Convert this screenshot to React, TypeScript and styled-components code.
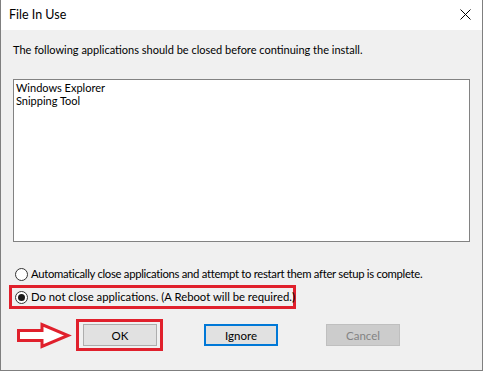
import React from "react";
import styled, { createGlobalStyle } from "styled-components";

const Global = createGlobalStyle`
  html, body { margin: 0; padding: 0; background: #ffffff; }
  body { font-family: Lato, "Noto Sans", sans-serif; font-size: 11px; color: #000; }
  * { box-sizing: border-box; }
`;

const Window = styled.div`
  width: 483px;
  height: 371px;
  border: 1px solid #7f7f7f;
  border-top: none;
  display: flex;
  flex-direction: column;
  background: #f0f0f0;
  overflow: hidden;
`;

const TitleBar = styled.div`
  height: 30px;
  background: #ffffff;
  display: flex;
  align-items: center;
  justify-content: space-between;
  padding: 0 11px 1px 8px;
`;

const TitleText = styled.span`
  font-size: 12.5px;
  color: #000;
`;

const CloseIcon = styled.svg`
  width: 11px;
  height: 11px;
  display: block;
`;

const Body = styled.div`
  flex: 1;
  display: flex;
  flex-direction: column;
  padding: 12px 12px 0 12px;
`;

const Instruction = styled.div`
  font-size: 11px;
  line-height: 16px;
  height: 16px;
`;

const ListBox = styled.div`
  margin-top: 21px;
  width: 457px;
  height: 163px;
  background: #ffffff;
  border: 1px solid #828282;
  padding: 1px 2px;
  display: flex;
  flex-direction: column;
`;

const ListItem = styled.div`
  line-height: 13px;
  height: 13px;
  font-size: 11px;
`;

const Options = styled.div`
  margin-top: 23px;
  display: flex;
  flex-direction: column;
  gap: 2px;
`;

const RadioRow = styled.label<{ $inset?: boolean }>`
  display: flex;
  align-items: center;
  gap: 3px;
  height: 18px;
  padding-left: ${(p) => (p.$inset ? 0 : 2)}px;
`;

const Highlight = styled.div`
  margin-left: -4px;
  width: 287px;
  height: 24px;
  border: 3px solid #e0202c;
  display: flex;
  align-items: center;
  padding-left: 3px;
`;

const Circle = styled.span<{ $checked?: boolean }>`
  width: 13px;
  height: 13px;
  border-radius: 50%;
  border: 1px solid #333333;
  background: #ffffff;
  display: flex;
  align-items: center;
  justify-content: center;
  flex: none;
  &::after {
    content: "";
    display: ${(p) => (p.$checked ? "block" : "none")};
    width: 7px;
    height: 7px;
    border-radius: 50%;
    background: #1a1a1a;
  }
`;

const RadioText = styled.span<{ $tight?: boolean }>`
  line-height: 16px;
  font-size: 11.3px;
  letter-spacing: ${(p) => (p.$tight ? "-0.3px" : "0")};
  white-space: nowrap;
`;

const ButtonRow = styled.div`
  margin-top: 10px;
  display: flex;
  align-items: center;
  padding-left: 4px;
`;

const Arrow = styled.svg`
  width: 55px;
  height: 27px;
  display: block;
  flex: none;
`;

const ButtonFrame = styled.div`
  margin-left: 4px;
  width: 87px;
  height: 32px;
  border: 3px solid #e0202c;
  padding: 2px 3px 2px 4px;
  display: flex;
`;

const Button = styled.div<{ $variant?: "default" | "focused" | "disabled" }>`
  width: 74px;
  height: 22px;
  flex: none;
  display: flex;
  align-items: center;
  justify-content: center;
  background: ${(p) => (p.$variant === "disabled" ? "#cccccc" : "#e1e1e1")};
  border: ${(p) =>
    p.$variant === "focused"
      ? "2px solid #0078d7"
      : p.$variant === "disabled"
      ? "1px solid #bfbfbf"
      : "1px solid #adadad"};
  color: ${(p) => (p.$variant === "disabled" ? "#838383" : "#000000")};
  font-size: 11.5px;
`;

const Spacer = styled.div<{ $w: number }>`
  width: ${(p) => p.$w}px;
  flex: none;
`;

export default function App() {
  return (
    <>
      <Global />
      <Window>
        <TitleBar>
          <TitleText>File In Use</TitleText>
          <CloseIcon viewBox="0 0 11 11">
            <path d="M0.5 0.5 L10.5 10.5 M10.5 0.5 L0.5 10.5" stroke="#000" strokeWidth="1" fill="none" />
          </CloseIcon>
        </TitleBar>
        <Body>
          <Instruction>The following applications should be closed before continuing the install.</Instruction>
          <ListBox>
            <ListItem>Windows Explorer</ListItem>
            <ListItem>Snipping Tool</ListItem>
          </ListBox>
          <Options>
            <RadioRow>
              <Circle />
              <RadioText $tight>Automatically close applications and attempt to restart them after setup is complete.</RadioText>
            </RadioRow>
            <Highlight>
              <RadioRow $inset>
                <Circle $checked />
                <RadioText>Do not close applications. (A Reboot will be required.)</RadioText>
              </RadioRow>
            </Highlight>
          </Options>
          <ButtonRow>
            <Arrow viewBox="0 0 55 27">
              <polygon
                points="1.5,8.5 25,8.5 25,2.5 51,13.5 25,24.5 25,18.5 1.5,18.5"
                fill="#ffffff"
                stroke="#e0202c"
                strokeWidth="3"
                strokeLinejoin="miter"
              />
            </Arrow>
            <ButtonFrame>
              <Button>OK</Button>
            </ButtonFrame>
            <Spacer $w={41} />
            <Button $variant="focused">Ignore</Button>
            <Spacer $w={48} />
            <Button $variant="disabled">Cancel</Button>
          </ButtonRow>
        </Body>
      </Window>
    </>
  );
}
